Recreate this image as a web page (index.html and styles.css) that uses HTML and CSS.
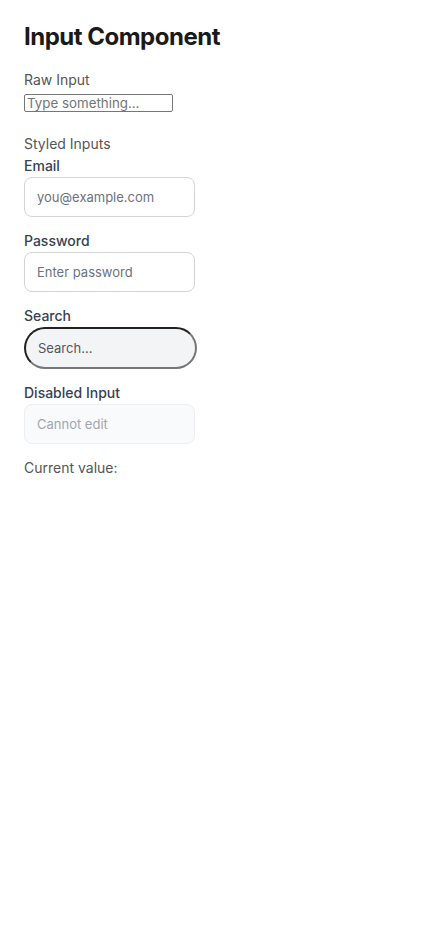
FILE: index.html
```html
<!DOCTYPE html>
<html lang="en">
<head>
<meta charset="utf-8">
<title>Input Component</title>
<link rel="stylesheet" href="styles.css">
</head>
<body>
<main class="page">
  <h1 class="title">Input Component</h1>
  <section class="raw">
    <p class="caption">Raw Input</p>
    <input class="raw-input" type="text" placeholder="Type something...">
  </section>
  <section class="styled">
    <p class="caption">Styled Inputs</p>
    <div class="field">
      <label class="label" for="email">Email</label>
      <input id="email" class="input" type="email" placeholder="you@example.com">
    </div>
    <div class="field">
      <label class="label" for="pw">Password</label>
      <input id="pw" class="input" type="password" placeholder="Enter password">
    </div>
    <div class="field">
      <label class="label" for="search">Search</label>
      <input id="search" class="input input-search" type="text" placeholder="Search...">
    </div>
    <div class="field">
      <label class="label" for="dis">Disabled Input</label>
      <input id="dis" class="input input-disabled" type="text" placeholder="Cannot edit" disabled>
    </div>
    <p class="caption value">Current value: </p>
  </section>
</main>
</body>
</html>
```

FILE: styles.css
```css
* { box-sizing: content-box; }
html, body { margin: 0; padding: 0; background: #fff; }
body { font-family: Inter, "Noto Sans", sans-serif; color: #1a1a1a; }
.page { padding: 23px 24px; display: flex; flex-direction: column; }
.title { margin: 0 0 20px; font-size: 24px; line-height: 28px; font-weight: 700; color: #1a1a1a; letter-spacing: -0.5px; }
.caption { margin: 0; font-size: 14px; line-height: 17px; color: #555; }
.raw { display: flex; flex-direction: column; align-items: flex-start; gap: 6px; margin-bottom: 23px; }
.raw-input {
  font-family: Inter, "Noto Sans", sans-serif; font-size: 13.33px;
  width: 143px; height: 16px; padding: 0 2px; margin: 0;
  border: 1px solid #767676; border-radius: 2px; color: #000; background: #fff; outline: none;
}
.raw-input::placeholder { color: #757575; }
.styled { display: flex; flex-direction: column; align-items: flex-start; }
.styled > .caption { margin-bottom: 5px; }
.field { display: flex; flex-direction: column; align-items: flex-start; gap: 3px; margin-bottom: 15px; }
.label { font-size: 14px; line-height: 17px; font-weight: 500; color: #374151; }
.input {
  font-family: Inter, "Noto Sans", sans-serif; font-size: 13px;
  width: 145px; height: 18px; padding: 10px 12px; margin: 0;
  border: 1px solid #d1d5db; border-radius: 8px; background: #fff; color: #111; outline: none;
}
.input::placeholder { color: #6b7280; }
.input-search { border: 2px inset #767676; border-radius: 21px; background: #f3f4f6; }
.input-search::placeholder { color: #555; }
.input-disabled { background: #f9fafb; border-color: #eceef1; }
.input-disabled::placeholder { color: #a1a6ae; }
```
